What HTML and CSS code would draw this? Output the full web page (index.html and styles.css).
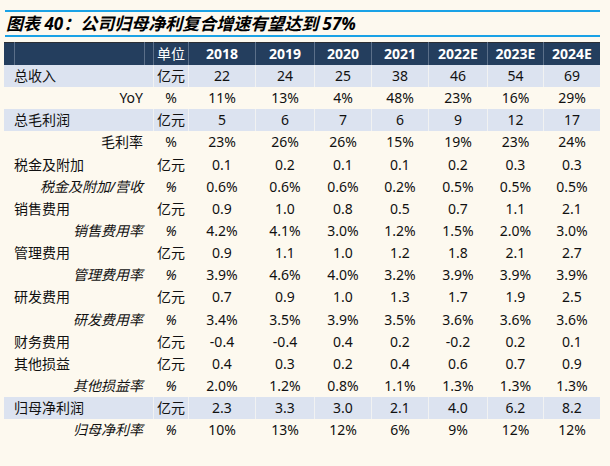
FILE: index.html
```html
<!DOCTYPE html>
<html lang="zh-CN">
<head>
<meta charset="utf-8">
<title>图表 40</title>
<link rel="stylesheet" href="styles.css">
</head>
<body>
<div class="page">
  <div class="title">图表 40：公司归母净利复合增速有望达到 57%</div>
  <div class="table">
    <div class="row head">
      <div class="c"></div><div class="c"></div><div class="c"></div>
      <div class="c unit">单位</div>
      <div class="c yr">2018</div><div class="c yr">2019</div><div class="c yr">2020</div><div class="c yr">2021</div><div class="c yr">2022E</div><div class="c yr">2023E</div><div class="c yr">2024E</div>
    </div>
    <div class="row shade">
      <div class="lab">总收入</div><div class="c">亿元</div>
      <div class="c">22</div><div class="c">24</div><div class="c">25</div><div class="c">38</div><div class="c">46</div><div class="c">54</div><div class="c">69</div>
    </div>
    <div class="row">
      <div class="lab right">YoY</div><div class="c">%</div>
      <div class="c">11%</div><div class="c">13%</div><div class="c">4%</div><div class="c">48%</div><div class="c">23%</div><div class="c">16%</div><div class="c">29%</div>
    </div>
    <div class="row shade">
      <div class="lab">总毛利润</div><div class="c">亿元</div>
      <div class="c">5</div><div class="c">6</div><div class="c">7</div><div class="c">6</div><div class="c">9</div><div class="c">12</div><div class="c">17</div>
    </div>
    <div class="row">
      <div class="lab right">毛利率</div><div class="c">%</div>
      <div class="c">23%</div><div class="c">26%</div><div class="c">26%</div><div class="c">15%</div><div class="c">19%</div><div class="c">23%</div><div class="c">24%</div>
    </div>
    <div class="row">
      <div class="lab">税金及附加</div><div class="c">亿元</div>
      <div class="c">0.1</div><div class="c">0.2</div><div class="c">0.1</div><div class="c">0.1</div><div class="c">0.2</div><div class="c">0.3</div><div class="c">0.3</div>
    </div>
    <div class="row ital">
      <div class="lab right">税金及附加/营收</div><div class="c">%</div>
      <div class="c">0.6%</div><div class="c">0.6%</div><div class="c">0.6%</div><div class="c">0.2%</div><div class="c">0.5%</div><div class="c">0.5%</div><div class="c">0.5%</div>
    </div>
    <div class="row">
      <div class="lab">销售费用</div><div class="c">亿元</div>
      <div class="c">0.9</div><div class="c">1.0</div><div class="c">0.8</div><div class="c">0.5</div><div class="c">0.7</div><div class="c">1.1</div><div class="c">2.1</div>
    </div>
    <div class="row ital">
      <div class="lab right">销售费用率</div><div class="c">%</div>
      <div class="c">4.2%</div><div class="c">4.1%</div><div class="c">3.0%</div><div class="c">1.2%</div><div class="c">1.5%</div><div class="c">2.0%</div><div class="c">3.0%</div>
    </div>
    <div class="row">
      <div class="lab">管理费用</div><div class="c">亿元</div>
      <div class="c">0.9</div><div class="c">1.1</div><div class="c">1.0</div><div class="c">1.2</div><div class="c">1.8</div><div class="c">2.1</div><div class="c">2.7</div>
    </div>
    <div class="row ital">
      <div class="lab right">管理费用率</div><div class="c">%</div>
      <div class="c">3.9%</div><div class="c">4.6%</div><div class="c">4.0%</div><div class="c">3.2%</div><div class="c">3.9%</div><div class="c">3.9%</div><div class="c">3.9%</div>
    </div>
    <div class="row">
      <div class="lab">研发费用</div><div class="c">亿元</div>
      <div class="c">0.7</div><div class="c">0.9</div><div class="c">1.0</div><div class="c">1.3</div><div class="c">1.7</div><div class="c">1.9</div><div class="c">2.5</div>
    </div>
    <div class="row ital">
      <div class="lab right">研发费用率</div><div class="c">%</div>
      <div class="c">3.4%</div><div class="c">3.5%</div><div class="c">3.9%</div><div class="c">3.5%</div><div class="c">3.6%</div><div class="c">3.6%</div><div class="c">3.6%</div>
    </div>
    <div class="row">
      <div class="lab">财务费用</div><div class="c">亿元</div>
      <div class="c">-0.4</div><div class="c">-0.4</div><div class="c">0.4</div><div class="c">0.2</div><div class="c">-0.2</div><div class="c">0.2</div><div class="c">0.1</div>
    </div>
    <div class="row">
      <div class="lab">其他损益</div><div class="c">亿元</div>
      <div class="c">0.4</div><div class="c">0.3</div><div class="c">0.2</div><div class="c">0.4</div><div class="c">0.6</div><div class="c">0.7</div><div class="c">0.9</div>
    </div>
    <div class="row ital">
      <div class="lab right">其他损益率</div><div class="c">%</div>
      <div class="c">2.0%</div><div class="c">1.2%</div><div class="c">0.8%</div><div class="c">1.1%</div><div class="c">1.3%</div><div class="c">1.3%</div><div class="c">1.3%</div>
    </div>
    <div class="row shade">
      <div class="lab">归母净利润</div><div class="c">亿元</div>
      <div class="c">2.3</div><div class="c">3.3</div><div class="c">3.0</div><div class="c">2.1</div><div class="c">4.0</div><div class="c">6.2</div><div class="c">8.2</div>
    </div>
    <div class="row ital">
      <div class="lab right">归母净利率</div><div class="c">%</div>
      <div class="c">10%</div><div class="c">13%</div><div class="c">12%</div><div class="c">6%</div><div class="c">9%</div><div class="c">12%</div><div class="c">12%</div>
    </div>
  </div>
</div>
</body>
</html>
```

FILE: styles.css
```css
html, body {
  margin: 0;
  padding: 0;
  background: #fdf9ef;
}

body {
  width: 610px;
  height: 466px;
  overflow: hidden;
  font-family: "Noto Sans", "Noto Sans CJK SC", sans-serif;
  color: #111;
}

.page {
  padding-top: 10px;
}

.title {
  margin: 0 10px 0 5px;
  border-top: 2px solid #1aa2e6;
  border-bottom: 2px solid #1aa2e6;
  height: 23px;
  line-height: 23px;
  font-size: 17px;
  font-weight: bold;
  font-style: italic;
  padding-left: 1px;
  color: #000;
  font-family: "Noto Sans", "Noto Sans CJK SC", sans-serif;
}

.table {
  margin: 5px 10px 0 4px;
  width: 596px;
}

.row {
  display: grid;
  grid-template-columns: 10px 130px 9px 35px 67px 59px 57px 57px 59px 56px 57px;
  height: 22.15px;
  line-height: 22px;
  font-size: 14px;
  --sep: transparent;
}

.row.head {
  height: 23px;
  line-height: 23px;
  background: #243e5e;
  color: #fff;
  box-shadow: inset 0 1px 0 #2c2f35;
  --sep: #5b6f89;
}

.row.shade {
  background: #dce3f0;
  --sep: #f1f2f2;
}

.c {
  text-align: center;
  white-space: nowrap;
  border-left: 1px solid var(--sep);
}

.row.head .c:first-child {
  border-left: none;
}

.yr {
  font-weight: bold;
}

.lab {
  grid-column: 1 / span 3;
  padding: 0 10px;
  white-space: nowrap;
}

.lab.right {
  text-align: right;
}

.ital .lab,
.ital .c:nth-child(2) {
  font-style: italic;
}
```
